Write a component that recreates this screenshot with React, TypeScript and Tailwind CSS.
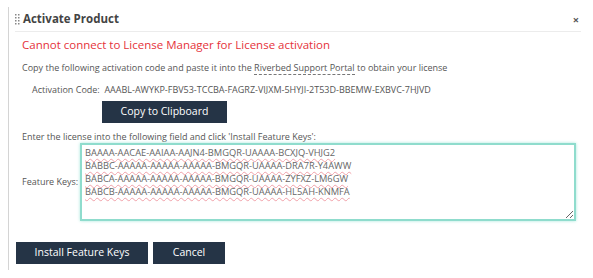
import React from "react";

const keys = [
  "BAAAA-AACAE-AAIAA-AAJN4-BMGQR-UAAAA-BCXJQ-VHJG2",
  "BABBC-AAAAA-AAAAA-AAAAA-BMGQR-UAAAA-DRA7R-Y4AWW",
  "BABCA-AAAAA-AAAAA-AAAAA-BMGQR-UAAAA-ZYFXZ-LM6GW",
  "BABCB-AAAAA-AAAAA-AAAAA-BMGQR-UAAAA-HL5AH-KNMFA",
];

export default function App() {
  return (
    <div className="h-[278px] w-[593px] bg-white pl-[8px] pt-[7px] font-['Open_Sans',sans-serif] text-[#555]">
      <div className="h-[263px] border-l border-[#d4d4d4] pl-[6px] pr-[12px]">
        {/* Header */}
        <div className="flex h-[25px] items-center justify-between border-b border-[#ececec] pr-[2px]">
          <div className="flex items-center gap-[3px]">
            <svg width="5" height="11" viewBox="0 0 5 11" className="mt-[1px]">
              {[0, 3, 6, 9].map((y) => (
                <g key={y} fill="#888">
                  <rect x="0" y={y} width="1.5" height="1.5" />
                  <rect x="3" y={y} width="1.5" height="1.5" />
                </g>
              ))}
            </svg>
            <h2 className="text-[11.5px] font-bold leading-none text-[#444]">Activate Product</h2>
          </div>
          <span className="text-[11px] font-bold leading-none text-[#555]">×</span>
        </div>

        <div className="pl-[7px]">
          <p className="mt-[5px] text-[11.5px] leading-[16px] text-[#e5323a]">
            Cannot connect to License Manager for License activation
          </p>
          <p className="mt-[8px] text-[9px] leading-[14px]">
            Copy the following activation code and paste it into the{" "}
            <span className="border-b border-dashed border-[#777]">Riverbed Support Portal</span> to obtain your license
          </p>
          <p className="mt-[8px] pl-[10px] text-[9px] leading-[14px]">
            Activation Code:&nbsp; AAABL-AWYKP-FBV53-TCCBA-FAGRZ-VIJXM-5HYJI-2T53D-BBEMW-EXBVC-7HJVD
          </p>
          <button className="ml-[80px] mt-[2px] h-[22px] w-[125px] bg-[#253446] text-[10.5px] text-white">
            Copy to Clipboard
          </button>
          <p className="mt-[8px] text-[9px] leading-[12px]">
            Enter the license into the following field and click 'Install Feature Keys':
          </p>
          <div className="flex items-center">
            <label className="w-[58px] whitespace-nowrap text-[9px]">Feature Keys:</label>
            <textarea
              defaultValue={keys.join("\n")}
              className="h-[78px] w-[496px] resize-y border-2 border-[#8fdccd] px-[3px] py-[1px] text-[9.3px] leading-[13px] text-[#666] underline decoration-[#f0a0a8] decoration-wavy decoration-[0.5px] underline-offset-2 shadow-[0_0_3px_#a8e8dc] outline-none"
            />
          </div>
        </div>

        <div className="mt-[21px] flex gap-[5px] pl-[1px]">
          <button className="h-[22px] w-[132px] bg-[#253446] text-[10.5px] text-white">Install Feature Keys</button>
          <button className="h-[22px] w-[72px] bg-[#253446] text-[10.5px] text-white">Cancel</button>
        </div>
      </div>
    </div>
  );
}
